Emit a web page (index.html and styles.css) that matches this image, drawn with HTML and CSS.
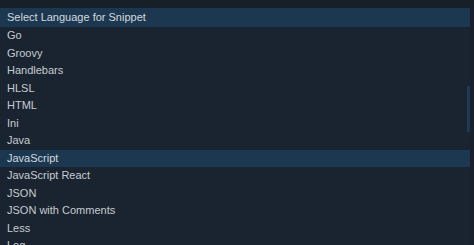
FILE: index.html
```html
<!DOCTYPE html>
<html lang="en">
<head>
    <meta charset="UTF-8">
    <meta name="viewport" content="width=device-width, initial-scale=1.0">
    <title>Select Language for Snippet</title>
    <link rel="stylesheet" href="styles.css">
</head>
<body>
    <!-- Top strip -->
    <div class="top-strip"></div>

    <!-- Quick pick -->
    <div class="picker">
        <div class="picker-title">Select Language for Snippet</div>
        <ul class="picker-list">
            <li class="item">Go</li>
            <li class="item">Groovy</li>
            <li class="item">Handlebars</li>
            <li class="item">HLSL</li>
            <li class="item">HTML</li>
            <li class="item">Ini</li>
            <li class="item">Java</li>
            <li class="item selected">JavaScript</li>
            <li class="item">JavaScript React</li>
            <li class="item">JSON</li>
            <li class="item">JSON with Comments</li>
            <li class="item">Less</li>
            <li class="item">Log</li>
        </ul>
        <div class="scrollbar"></div>
    </div>
</body>
</html>
```

FILE: styles.css
```css
/* General Styles */
* {
    margin: 0;
    padding: 0;
    box-sizing: border-box;
}

html, body {
    height: 100%;
    overflow: hidden;
}

body {
    background: #1a2430;
    font-family: "Liberation Sans", Arial, sans-serif;
    font-size: 11px;
    color: #c6cbd1;
}

.top-strip {
    height: 8px;
    background: #172029;
}

.picker {
    position: relative;
    height: 237px;
    overflow: hidden;
    border-right: 4px solid #18212b;
}

.picker-title {
    height: 19px;
    line-height: 19px;
    padding-left: 7px;
    background: #1c3850;
    color: #d3d8de;
}

.picker-list {
    list-style: none;
}

.item {
    height: 17.5px;
    line-height: 17.5px;
    padding-left: 7px;
}

.item.selected {
    background: #1c3850;
    color: #d3d8de;
}

/* Scrollbar thumb sits over the list */
.scrollbar {
    position: absolute;
    top: 78px;
    right: -4px;
    width: 7px;
    height: 46px;
    background: #1e3a52;
}
```
